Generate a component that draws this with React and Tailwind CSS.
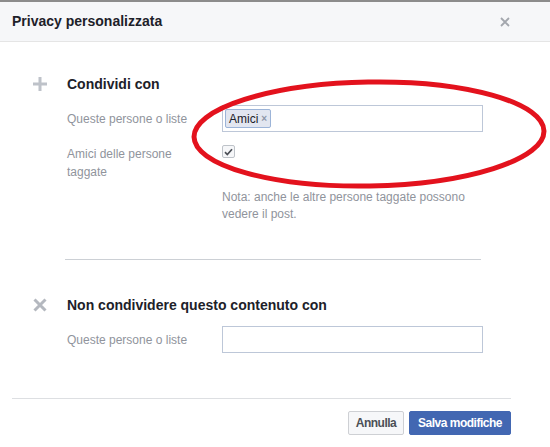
import React from "react";

function PlusIcon() {
  return (
    <svg width="16" height="16" viewBox="0 0 16 16">
      <path d="M8 1v14M1 8h14" stroke="#bec2c9" strokeWidth="3" />
    </svg>
  );
}

function CrossIcon() {
  return (
    <svg width="16" height="16" viewBox="0 0 16 16">
      <path d="M2.5 2.5l11 11M13.5 2.5l-11 11" stroke="#b4b8bf" strokeWidth="3" />
    </svg>
  );
}

export default function App() {
  return (
    <div className="relative w-[550px] h-[447px] overflow-hidden bg-white font-['Liberation_Sans',Arial,sans-serif]">
      <div className="h-[2px] bg-[#8c8c8c]" />

      {/* header */}
      <div className="h-[40px] bg-[#f6f7f9] border-b border-[#e5e5e5] flex items-center justify-between pl-[12px] pr-[40px]">
        <div className="text-[14px] font-bold text-[#1d2129]">Privacy personalizzata</div>
        <svg width="10" height="10" viewBox="0 0 10 10">
          <path d="M1 1l8 8M9 1l-8 8" stroke="#a3a7ae" strokeWidth="1.8" />
        </svg>
      </div>

      {/* share with */}
      <div className="pl-[32px] pt-[33px]">
        <div className="flex items-center h-[18px]">
          <div className="w-[35px]">
            <PlusIcon />
          </div>
          <div className="text-[14px] font-bold text-[#1d2129]">Condividi con</div>
        </div>

        <div className="flex items-center mt-[12px] pl-[35px]">
          <div className="w-[155px] text-[12px] text-[#90949c]">Queste persone o liste</div>
          <div className="w-[261px] h-[27px] border border-[#bdc7d8] flex items-center pl-[2px]">
            <div className="h-[19px] flex items-center gap-[3px] px-[3px] bg-[#e2e6f0] border border-[#9cb4d8] rounded-[2px] text-[12px] text-[#1d2129]">
              Amici
              <span className="text-[10px] font-bold text-[#8d96a8] leading-none">×</span>
            </div>
          </div>
        </div>

        <div className="flex items-start mt-[13px] pl-[35px]">
          <div className="w-[155px] text-[12px] leading-[18px] text-[#90949c]">
            Amici delle persone
            <br />
            taggate
          </div>
          <div className="w-[13px] h-[13px] border border-[#bec3c9] rounded-[2px] flex items-center justify-center bg-[#f6f7f9]">
            <svg width="9" height="8" viewBox="0 0 9 8">
              <path d="M1 4.2l2.3 2.3L8 1.2" stroke="#4b4f56" strokeWidth="1.7" fill="none" />
            </svg>
          </div>
        </div>

        <div className="pl-[190px] mt-[8px] text-[12px] leading-[17px] text-[#90949c]">
          Nota: anche le altre persone taggate possono
          <br />
          vedere il post.
        </div>
      </div>

      <div className="ml-[65px] w-[416px] h-px bg-[#ccd0d5] mt-[36px]" />

      {/* don't share with */}
      <div className="pl-[32px] pt-[36px]">
        <div className="flex items-center h-[18px]">
          <div className="w-[35px]">
            <CrossIcon />
          </div>
          <div className="text-[14px] font-bold text-[#1d2129]">Non condividere questo contenuto con</div>
        </div>

        <div className="flex items-center mt-[12px] pl-[35px]">
          <div className="w-[155px] text-[12px] text-[#90949c]">Queste persone o liste</div>
          <div className="w-[261px] h-[27px] border border-[#bdc7d8]" />
        </div>
      </div>

      {/* footer */}
      <div className="ml-[12px] w-[499px] h-px bg-[#dddfe2] mt-[45px]" />
      <div className="flex justify-end gap-[5px] pr-[39px] mt-[12px]">
        <button className="h-[24px] w-[56px] border border-[#ced0d4] bg-[#f6f7f9] rounded-[2px] text-[12px] font-bold tracking-[-0.5px] text-[#4b4f56]">
          Annulla
        </button>
        <button className="h-[24px] w-[102px] border border-[#4267b2] bg-[#4267b2] rounded-[2px] text-[12px] font-bold tracking-[-0.5px] text-white">
          Salva modifiche
        </button>
      </div>

      {/* red annotation ellipse */}
      <svg className="absolute left-0 top-0 pointer-events-none" width="550" height="447">
        <ellipse cx="369" cy="134" rx="175" ry="52" fill="none" stroke="#e3121d" strokeWidth="5" transform="rotate(-1 369 134)" />
      </svg>
    </div>
  );
}
